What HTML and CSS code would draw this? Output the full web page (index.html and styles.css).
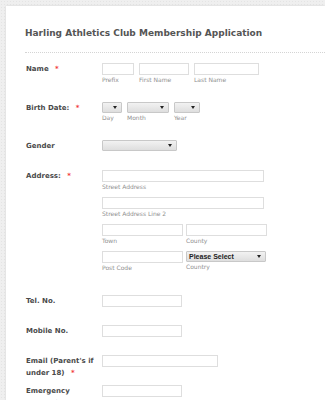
FILE: index.html
```html
<!DOCTYPE html>
<html lang="en">
<head>
  <meta charset="UTF-8">
  <meta name="viewport" content="width=device-width, initial-scale=1.0">
  <title>Harling Athletics Club Membership Application</title>
  <link rel="stylesheet" href="styles.css">
</head>
<body>
  <div class="form-card">
    <!-- 标题 -->
    <div class="form-header">
      <h2 class="form-title">Harling Athletics Club Membership Application</h2>
    </div>

    <ul class="form-lines">
      <!-- Name -->
      <li class="form-line">
        <label class="form-label">Name <span class="req">*</span></label>
        <div class="form-input">
          <div class="sub-row">
            <span class="sub-field">
              <input type="text" class="txt w-prefix">
              <span class="sublabel">Prefix</span>
            </span>
            <span class="sub-field">
              <input type="text" class="txt w-first">
              <span class="sublabel">First Name</span>
            </span>
            <span class="sub-field">
              <input type="text" class="txt w-last">
              <span class="sublabel">Last Name</span>
            </span>
          </div>
        </div>
      </li>

      <!-- Birth date -->
      <li class="form-line">
        <label class="form-label">Birth Date: <span class="req">*</span></label>
        <div class="form-input">
          <div class="sub-row">
            <span class="sub-field">
              <span class="select w-day"></span>
              <span class="sublabel">Day</span>
            </span>
            <span class="sub-field">
              <span class="select w-month"></span>
              <span class="sublabel">Month</span>
            </span>
            <span class="sub-field">
              <span class="select w-year"></span>
              <span class="sublabel">Year</span>
            </span>
          </div>
        </div>
      </li>

      <!-- Gender -->
      <li class="form-line">
        <label class="form-label">Gender</label>
        <div class="form-input">
          <span class="select w-gender"></span>
        </div>
      </li>

      <!-- Address -->
      <li class="form-line address-line">
        <label class="form-label">Address: <span class="req">*</span></label>
        <div class="form-input address">
          <span class="sub-field">
            <input type="text" class="txt w-street">
            <span class="sublabel">Street Address</span>
          </span>
          <span class="sub-field">
            <input type="text" class="txt w-street">
            <span class="sublabel">Street Address Line 2</span>
          </span>
          <div class="addr-pair">
            <span class="sub-field">
              <input type="text" class="txt w-half">
              <span class="sublabel">Town</span>
            </span>
            <span class="sub-field">
              <input type="text" class="txt w-half">
              <span class="sublabel">County</span>
            </span>
          </div>
          <div class="addr-pair">
            <span class="sub-field">
              <input type="text" class="txt w-half">
              <span class="sublabel">Post Code</span>
            </span>
            <span class="sub-field">
              <span class="select w-country">Please Select</span>
              <span class="sublabel">Country</span>
            </span>
          </div>
        </div>
      </li>

      <li class="form-line">
        <label class="form-label">Tel. No.</label>
        <div class="form-input"><input type="text" class="txt w-phone"></div>
      </li>

      <li class="form-line">
        <label class="form-label">Mobile No.</label>
        <div class="form-input"><input type="text" class="txt w-phone"></div>
      </li>

      <li class="form-line">
        <label class="form-label">Email (Parent's if under 18) <span class="req">*</span></label>
        <div class="form-input"><input type="text" class="txt w-email"></div>
      </li>

      <li class="form-line">
        <label class="form-label">Emergency contact's name</label>
        <div class="form-input"><input type="text" class="txt w-phone"></div>
      </li>
    </ul>
  </div>
</body>
</html>
```

FILE: styles.css
```css
body {
  margin: 0;
  font-family: "DejaVu Sans", Verdana, sans-serif;
  background-color: #efefef;
  background-image: radial-gradient(#e4e4e4 1px, transparent 1px);
  background-size: 3px 3px;
  color: #555;
  padding: 6px 0 0 6px;
  overflow: hidden;
}

/* 表单卡片 */
.form-card {
  background: #fff;
  box-shadow: 0 0 2px rgba(0, 0, 0, 0.12);
  padding: 0 0 0 19px;
  min-height: 500px;
}
.form-header {
  padding: 22px 0 14px 0;
  border-bottom: 1px dotted #d4d4d4;
}
.form-title {
  margin: 0;
  font-size: 9px;
  font-weight: bold;
  color: #555;
}

.form-lines {
  list-style: none;
  margin: 0;
  padding: 1px 0 0 0;
}
.form-line {
  display: flex;
  padding: 9px 0;
}
.address-line {
  padding-bottom: 14px;
}
/* 标签只占一行高度，多余的行溢出到下方 */
.form-label {
  width: 72px;
  height: 12px;
  margin-right: 4px;
  padding-left: 1px;
  font-size: 7px;
  font-weight: bold;
  line-height: 12px;
  color: #4a4a4a;
}
.req {
  color: #f23a3c;
  margin-left: 4px;
}

.form-input {
  display: flex;
  flex-direction: column;
}
.sub-row {
  display: flex;
  gap: 5px;
}
.sub-field {
  display: flex;
  flex-direction: column;
}
.sublabel {
  font-size: 6px;
  color: #909090;
  line-height: 8px;
  margin-top: 1px;
}

/* 文本框 */
.txt {
  box-sizing: border-box;
  height: 12px;
  margin: 0;
  padding: 0;
  border: 1px solid #dedede;
  background: #fff;
  font-size: 8px;
}
.w-prefix { width: 32px; }
.w-first { width: 50px; }
.w-last { width: 65px; }
.w-street { width: 162px; }
.w-half { width: 81px; }
.w-phone { width: 80px; }
.w-email { width: 116px; }

/* 下拉框 */
.select {
  box-sizing: border-box;
  display: block;
  position: relative;
  height: 11px;
  border: 1px solid #c8c8c8;
  border-radius: 1px;
  background: linear-gradient(#f2f2f2, #dedede);
  font-family: "Liberation Sans", Arial, sans-serif;
  font-size: 7px;
  line-height: 9px;
  padding-left: 2px;
  color: #222;
}
.select::after {
  content: "";
  position: absolute;
  right: 4px;
  top: 3px;
  border-left: 2px solid transparent;
  border-right: 2px solid transparent;
  border-top: 3px solid #222;
}
.w-day { width: 20px; }
.w-month { width: 42px; }
.w-year { width: 26px; }
.w-gender { width: 75px; }
.w-country { width: 80px; font-weight: bold; }

/* 地址 */
.address {
  gap: 6px;
}
.addr-pair {
  display: flex;
  gap: 3px;
}
```
